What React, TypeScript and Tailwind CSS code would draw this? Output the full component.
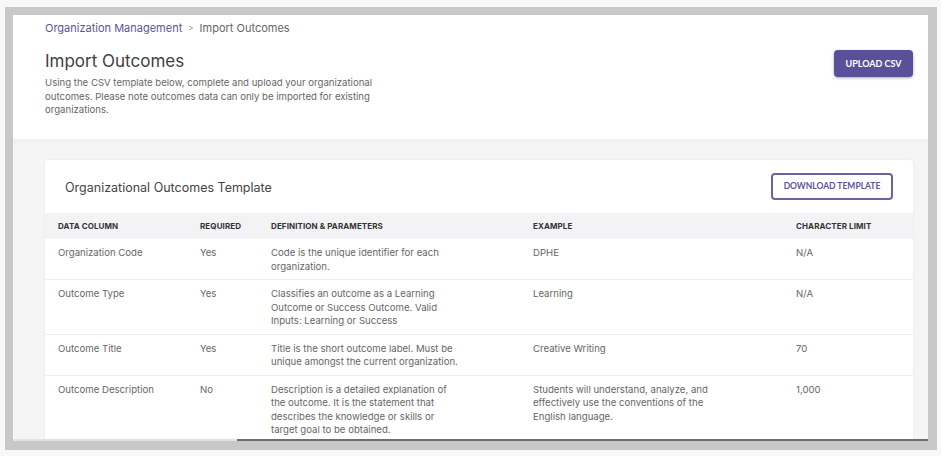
import React from "react";

const rows = [
  {
    col: "Organization Code",
    req: "Yes",
    def: "Code is the unique identifier for each organization.",
    ex: "DPHE",
    lim: "N/A",
  },
  {
    col: "Outcome Type",
    req: "Yes",
    def: "Classifies an outcome as a Learning Outcome or Success Outcome. Valid Inputs: Learning or Success",
    ex: "Learning",
    lim: "N/A",
  },
  {
    col: "Outcome Title",
    req: "Yes",
    def: "Title is the short outcome label. Must be unique amongst the current organization.",
    ex: "Creative Writing",
    lim: "70",
  },
  {
    col: "Outcome Description",
    req: "No",
    def: "Description is a detailed explanation of the outcome. It is the statement that describes the knowledge or skills or target goal to be obtained.",
    ex: "Students will understand, analyze, and effectively use the conventions of the English language.",
    lim: "1,000",
  },
];

const gridCols = "grid grid-cols-[142px_71px_262px_263px_1fr]";

export default function App() {
  return (
    <div
      className="w-[941px] h-[456px] bg-[#f8f8f8] pt-[7px] pl-[5px] overflow-hidden"
      style={{ fontFamily: "Inter, 'Noto Sans', sans-serif" }}
    >
      <div className="w-[932px] h-[443px] bg-[#c8c8c8] pl-[8px] pt-[8px] pr-[9px]">
        <div className="w-[915px] h-[426px] flex flex-col overflow-hidden">
          {/* Header */}
          <div className="h-[124px] bg-white pl-[32px] pr-[15px] pt-[6px] flex justify-between shrink-0">
            <div>
              <div className="flex items-center text-[11px] leading-[14px] h-[14px]">
                <span className="text-[#5b5597]">Organization Management</span>
                <span className="text-[#888] text-[8px] mx-[6px]">&gt;</span>
                <span className="text-[#666]">Import Outcomes</span>
              </div>
              <h1 className="text-[17px] leading-[22px] text-[#3f3f3f] mt-[15px]">Import Outcomes</h1>
              <p className="text-[9.6px] leading-[13.5px] text-[#666] mt-[4px] w-[345px]">
                Using the CSV template below, complete and upload your organizational outcomes. Please note outcomes data can only be imported for existing organizations.
              </p>
            </div>
            <div className="pt-[28px]">
              <button
                className="w-[79px] h-[27px] rounded-[4px] bg-[#58519a] text-white text-[9px] font-bold shadow-[0_1px_3px_rgba(0,0,0,0.35)]"
                style={{ fontFamily: "Lato, 'Open Sans', sans-serif" }}
              >
                UPLOAD CSV
              </button>
            </div>
          </div>

          {/* Body */}
          <div className="flex-1 bg-[#f5f5f5] pl-[32px] pr-[15px] pt-[21px] overflow-hidden shadow-[inset_0_6px_8px_-6px_rgba(0,0,0,0.05)]">
            <div className="bg-white rounded-t-[4px] shadow-[0_0_3px_rgba(0,0,0,0.06)]">
              <div className="h-[53px] flex items-center justify-between pl-[20px] pr-[20px]">
                <div className="text-[12.5px] text-[#444] mt-[3px]">Organizational Outcomes Template</div>
                <button
                  className="w-[122px] h-[27px] rounded-[4px] border-2 border-[#6a639f] text-[#5b5597] text-[8.5px] font-bold bg-white"
                  style={{ fontFamily: "Lato, 'Open Sans', sans-serif" }}
                >
                  DOWNLOAD TEMPLATE
                </button>
              </div>
              <div className={`${gridCols} h-[26px] items-center bg-[#f3f3f5] text-[8px] font-bold text-[#333] tracking-[0.1px]`}>
                <div className="pl-[13px]">DATA COLUMN</div>
                <div className="pl-[13px]">REQUIRED</div>
                <div className="pl-[13px]">DEFINITION &amp; PARAMETERS</div>
                <div className="pl-[13px]">EXAMPLE</div>
                <div className="pl-[13px]">CHARACTER LIMIT</div>
              </div>
              {rows.map((r, i) => (
                <div
                  key={i}
                  className={`${gridCols} pt-[7px] pb-[6px] text-[9.6px] leading-[13.5px] text-[#666] ${i < rows.length - 1 ? "border-b border-[#eeeeee]" : ""}`}
                >
                  <div className="pl-[13px]">{r.col}</div>
                  <div className="pl-[13px]">{r.req}</div>
                  <div className="pl-[13px]">
                    <div className="w-[188px]">{r.def}</div>
                  </div>
                  <div className="pl-[13px]">
                    <div className="w-[190px]">{r.ex}</div>
                  </div>
                  <div className="pl-[13px]">{r.lim}</div>
                </div>
              ))}
            </div>
          </div>
          <div className="flex h-[2px] shrink-0">
            <div className="w-[224px] bg-[#e2e2e2]" />
            <div className="flex-1 bg-[#6e6e6e]" />
          </div>
        </div>
      </div>
    </div>
  );
}
